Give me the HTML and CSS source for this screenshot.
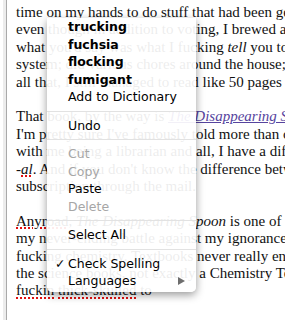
FILE: index.html
```html
<!DOCTYPE html>
<html>
<head>
<meta charset="utf-8">
<link rel="stylesheet" href="styles.css">
</head>
<body>
<div class="page">
  <div class="frame">
    <div class="content">
      <p>time on my hands to do stuff that had been getting put off<br>
      even though in addition to voting, I brewed a little<br>
      what you'd say was what I fucking <i>tell</i> you to do<br>
      system; did various chores around the house; and<br>
      all that, I still managed to read like 50 pages of</p>
      <p>That book, by the way is <a class="link" href="#"><i>The Disappearing Spoon</i></a>,<br>
      I'm pretty sure I've famously told more than once<br>
      with me being a librarian and all, I have a different<br>
      -<i class="sp">al</i>. And if you don't know the difference between<br>
      subscription through the mail.</p>
      <p><span class="sp">Anyroad</span>, <i>The Disappearing Spoon</i> is one of the<br>
      my never-ending battle against my ignorance of<br>
      fucking chemistry. Textbooks never really engaged<br>
      the science books, not exactly a Chemistry Textbook<br>
      <span class="sp">fuckin</span> <span class="sp">thick-skulled</span> to</p>
    </div>
  </div>
  <div class="menu">
    <div class="item b">trucking</div>
    <div class="item b">fuchsia</div>
    <div class="item b">flocking</div>
    <div class="item b">fumigant</div>
    <div class="item">Add to Dictionary</div>
    <div class="sep"></div>
    <div class="item">Undo</div>
    <div class="sep"></div>
    <div class="item dis">Cut</div>
    <div class="item dis">Copy</div>
    <div class="item">Paste</div>
    <div class="item dis">Delete</div>
    <div class="sep"></div>
    <div class="item">Select All</div>
    <div class="sep"></div>
    <div class="item checked">Check Spelling</div>
    <div class="item sub">Languages</div>
  </div>
</div>
</body>
</html>
```

FILE: styles.css
```css
html, body {
  margin: 0;
  padding: 0;
  background: #fff;
}

body {
  width: 285px;
  height: 320px;
  overflow: hidden;
}

.page {
  position: relative;
  width: 285px;
  height: 320px;
  overflow: hidden;
}

.frame {
  margin-left: 3px;
  border-left: 3px solid #ececec;
  height: 320px;
}

.content {
  border-left: 1px solid #a9a9a9;
  height: 320px;
  padding-left: 9px;
  padding-top: 4px;
  box-sizing: border-box;
  font-family: "Liberation Serif", "Times New Roman", serif;
  font-size: 15px;
  line-height: 17.4px;
  color: #111;
}

.content p {
  margin: 0 0 17.4px;
  white-space: nowrap;
}

.link {
  color: #56449e;
  text-decoration: underline;
}

.sp {
  text-decoration: underline dotted #e01010;
  text-decoration-thickness: 2px;
  text-underline-offset: 2px;
}

.menu {
  position: absolute;
  left: 47px;
  top: 18px;
  width: 149px;
  background: rgba(255, 255, 255, 0.92);
  border-radius: 0 0 5px 5px;
  box-shadow: 0 3px 9px rgba(0, 0, 0, 0.4);
  font-family: "DejaVu Sans", "Lucida Grande", sans-serif;
  font-size: 12.5px;
  padding: 0 0 2px;
}

.item {
  position: relative;
  height: 17.5px;
  line-height: 17.5px;
  padding-left: 21px;
  color: #000;
  white-space: nowrap;
}

.item.b {
  font-weight: bold;
}

.item.dis {
  color: #a6a6a6;
}

.sep {
  height: 1px;
  background: #e2e2e2;
  margin: 5px 0;
}

.item.checked::before {
  content: "\2713";
  position: absolute;
  left: 8px;
  top: 0;
}

.item.sub::after {
  content: "";
  position: absolute;
  right: 11px;
  top: 5px;
  border-left: 7px solid #6e6e6e;
  border-top: 4px solid transparent;
  border-bottom: 4px solid transparent;
}
```
